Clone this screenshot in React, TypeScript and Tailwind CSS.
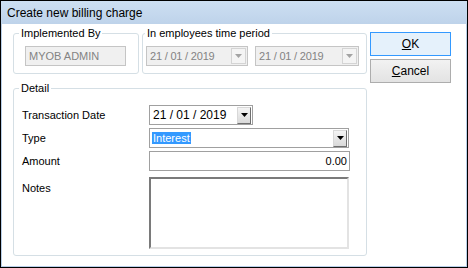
import React from 'react'

const font = { fontFamily: '"Liberation Sans", Arial, sans-serif' }

function Arrow({ color = '#000' }: { color?: string }) {
  return (
    <svg width="7" height="4" viewBox="0 0 7 4">
      <path d="M0 0h7L3.5 4z" fill={color} />
    </svg>
  )
}

function DisabledDate({ width }: { width: string }) {
  return (
    <div
      className={`flex h-[20px] ${width} items-center border border-[#c5c5c5] bg-[#f0f0f0] pl-[3px] pr-[1px]`}
    >
      <span className="flex-1 text-[11px] tracking-[-0.2px] text-[#838383]">21 / 01 / 2019</span>
      <div className="flex h-[16px] w-[15px] items-center justify-center border border-[#d4d4d4] bg-[#f4f4f4]">
        <Arrow color="#a3a3a3" />
      </div>
    </div>
  )
}

function DropButton() {
  return (
    <div className="flex h-[17px] w-[14px] items-center justify-center border border-t-[#d8d8d8] border-l-[#d8d8d8] border-r-[#6f6f6f] border-b-[#6f6f6f] bg-gradient-to-b from-[#f4f4f4] to-[#d9d9d9]">
      <Arrow />
    </div>
  )
}

export default function App() {
  return (
    <div
      className="flex h-[268px] w-[468px] flex-col border border-black bg-white text-[11px] text-black"
      style={font}
    >
      <div className="flex h-[23px] items-center bg-gradient-to-b from-[#cddff2] to-[#bed3ea] pl-[6px] text-[12px]">
        Create new billing charge
      </div>

      <div className="flex flex-1 gap-[3px] border-x border-b border-[#b9cfe8] bg-white pl-[11px]">
        <div className="flex w-[354px] flex-col pt-[3px]">
          <div className="flex gap-[3px]">
            <fieldset className="w-[126px] rounded-[3px] border border-[#d5dfe5] pb-[7px]">
              <legend className="ml-[5px] px-[2px] leading-[13px]">Implemented By</legend>
              <div className="ml-[11px] mt-[6px] flex h-[20px] w-[101px] items-center border border-[#c5c5c5] bg-[#f0f0f0] pl-[3px] text-[#838383]">
                MYOB ADMIN
              </div>
            </fieldset>
            <fieldset className="w-[225px] rounded-[3px] border border-[#d5dfe5] pb-[7px]">
              <legend className="ml-[2px] px-[2px] leading-[13px]">In employees time period</legend>
              <div className="ml-[3px] mt-[6px] flex gap-[7px]">
                <DisabledDate width="w-[102px]" />
                <DisabledDate width="w-[104px]" />
              </div>
            </fieldset>
          </div>

          <fieldset className="mt-[8px] h-[174px] rounded-[3px] border border-[#d5dfe5]">
            <legend className="ml-[5px] px-[2px] leading-[13px]">Detail</legend>
            <div className="ml-[8px] mt-[10px] flex flex-col gap-[3px]">
              <div className="flex items-center">
                <span className="w-[127px]">Transaction Date</span>
                <div className="flex h-[20px] w-[104px] items-center border border-[#a0a0a0] bg-white pl-[3px] pr-[1px]">
                  <span className="flex-1 text-[12px]">21 / 01 / 2019</span>
                  <DropButton />
                </div>
              </div>
              <div className="flex items-center">
                <span className="w-[127px]">Type</span>
                <div className="flex h-[20px] w-[200px] items-center border border-[#a0a0a0] bg-white pl-[2px] pr-[1px]">
                  <div className="flex-1">
                    <span className="bg-[#3399ff] px-[1px] text-white">Interest</span>
                  </div>
                  <DropButton />
                </div>
              </div>
              <div className="flex items-center">
                <span className="w-[127px]">Amount</span>
                <div className="flex h-[20px] w-[201px] items-center justify-end border border-[#a0a0a0] bg-white pr-[2px]">
                  0.00
                </div>
              </div>
              <div className="mt-[3px] flex items-start">
                <span className="mt-[3px] w-[127px]">Notes</span>
                <div className="h-[72px] w-[200px] border-2 border-t-[#7a7a7a] border-l-[#7a7a7a] border-r-[#e3e3e3] border-b-[#e3e3e3] bg-white" />
              </div>
            </div>
          </fieldset>
        </div>

        <div className="flex w-[81px] flex-col gap-[3px] pt-[8px]">
          <button className="h-[24px] border border-[#3399ff] bg-[#e5f1fb] text-[12px]">
            <span className="underline">O</span>K
          </button>
          <button className="h-[24px] border border-[#adadad] bg-gradient-to-b from-[#f2f2f2] to-[#e3e3e3] text-[12px]">
            <span className="underline">C</span>ancel
          </button>
        </div>
      </div>
    </div>
  )
}
